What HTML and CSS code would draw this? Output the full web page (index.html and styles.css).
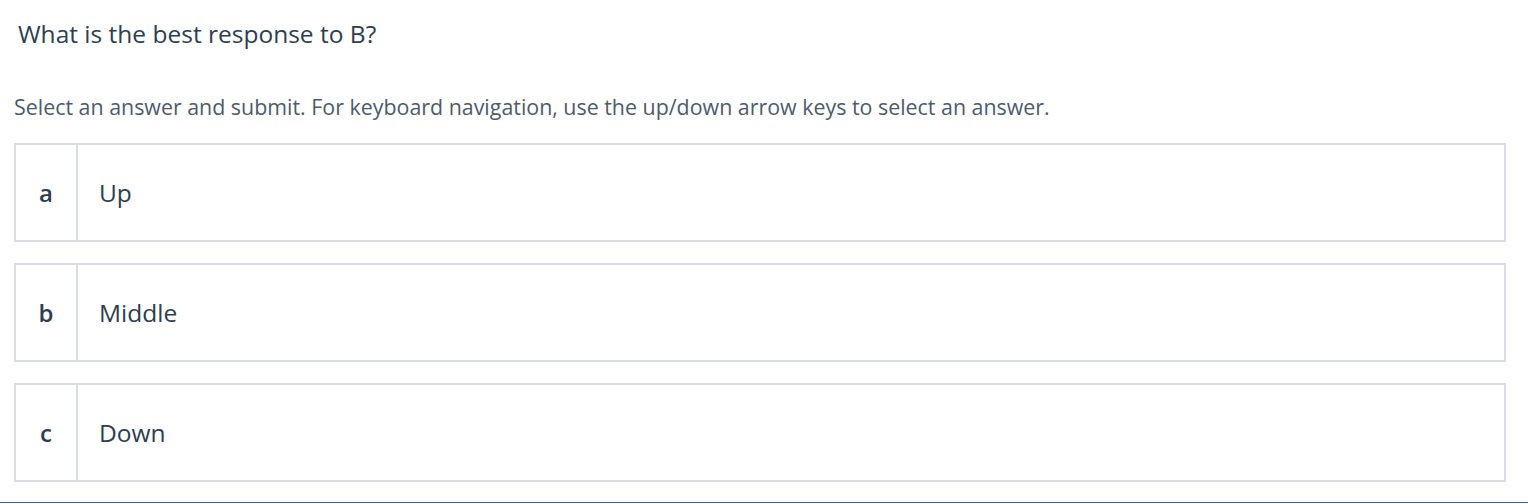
FILE: index.html
```html
<!DOCTYPE html>
<html>
<head>
<meta charset="utf-8">
<link rel="stylesheet" href="styles.css">
</head>
<body>
<div class="page">
  <h1 class="question">What is the best response to B?</h1>
  <p class="hint">Select an answer and submit. For keyboard navigation, use the up/down arrow keys to select an answer.</p>
  <div class="options">
    <div class="option"><div class="letter">a</div><div class="text">Up</div></div>
    <div class="option"><div class="letter">b</div><div class="text">Middle</div></div>
    <div class="option"><div class="letter">c</div><div class="text">Down</div></div>
  </div>
</div>
<div class="bottom-line"></div>
</body>
</html>
```
FILE: styles.css
```css
html, body {
  margin: 0;
  padding: 0;
  background: #ffffff;
}
body {
  width: 1528px;
  height: 504px;
  position: relative;
  overflow: hidden;
  font-family: "Open Sans", Lato, sans-serif;
}
.page {
  padding: 0 22px 0 14px;
}
.question {
  margin: 0;
  padding: 18px 0 0 4px;
  height: 32px;
  line-height: 32px;
  font-size: 24.5px;
  font-weight: 400;
  color: #2d3e50;
}
.hint {
  margin: 0;
  padding-top: 42px;
  height: 30px;
  line-height: 30px;
  font-size: 21.4px;
  color: #4d5b6b;
}
.options {
  margin-top: 21px;
  display: flex;
  flex-direction: column;
  gap: 21px;
}
.option {
  display: flex;
  height: 95px;
  border: 2px solid #d9dde1;
}
.letter {
  width: 60px;
  border-right: 2px solid #d9dde1;
  display: flex;
  align-items: center;
  justify-content: center;
  font-size: 24px;
  font-weight: 600;
  color: #2d3e50;
}
.text {
  flex: 1;
  display: flex;
  align-items: center;
  padding-left: 21px;
  font-size: 24.5px;
  color: #2d3e50;
}
.bottom-line {
  position: absolute;
  left: 0;
  right: 0;
  bottom: 1px;
  height: 1px;
  background: #3b5fae;
}
```
